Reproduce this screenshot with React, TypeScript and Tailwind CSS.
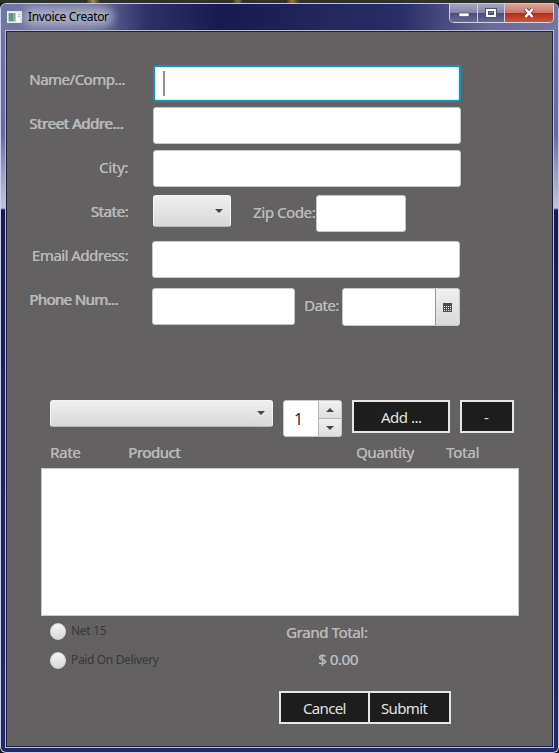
import React from "react";

const field =
  "box-border shrink-0 rounded-[3px] border border-[#c9c8c8] bg-white";
const silver =
  "box-border shrink-0 rounded-[3px] border border-[#f4f4f4] border-b-[#b8b8b8] bg-gradient-to-b from-[#efefef] to-[#d9d9d9]";
const label =
  "block shrink-0 whitespace-nowrap text-[15px] leading-[20px] text-[#b9b9b9]";
const thin = "[text-shadow:.3px_0_#b9b9b9]";
const heavy = "[text-shadow:.8px_0_#b9b9b9]";
const dark =
  "box-border shrink-0 border-2 border-[#e6e6e6] bg-[#1d1d1d] text-[15px] leading-[20px] pt-[5px] pb-[4px] text-[#e2e2e2] whitespace-nowrap text-left";

function Arrow({ up = false }: { up?: boolean }) {
  return (
    <svg width="8" height="4" viewBox="0 0 8 4" className="block shrink-0">
      <path d={up ? "M0 4L4 0L8 4Z" : "M0 0H8L4 4Z"} fill="#464646" />
    </svg>
  );
}

function Radio({ text, className }: { text: string; className: string }) {
  return (
    <div className="flex h-[29px] items-start">
      <span className="mt-px h-[17px] w-4 shrink-0 rounded-full border border-[#cfcfcf] bg-gradient-to-b from-[#f5f5f5] to-[#d8d8d8]" />
      <span
        className={`ml-[5px] whitespace-nowrap text-[12px] leading-[18px] text-[#373737] ${className}`}
      >
        {text}
      </span>
    </div>
  );
}

function TitleBar() {
  return (
    <header className="h-[26px] shrink-0 overflow-hidden rounded-t-[5px] bg-[linear-gradient(90deg,#7476a2_0px,#6c6e9e_90px,#2f3269_145px,#171950_220px,#24285f_330px,#292d68_400px,#6a6b98_490px,#7477a2_558px)]">
      <div className="flex h-full items-start">
        <svg width="15" height="12" viewBox="0 0 15 12" className="ml-[6px] mt-[7px] shrink-0">
          <rect width="15" height="12" fill="#e9eeee" />
          <rect x="1.5" y="2" width="7" height="8.5" fill="#88aaa2" />
          <rect x="2" y="2.5" width="4" height="7.5" fill="#5c9484" />
          <rect x="9" y="2" width="4" height="8.5" fill="#fff" />
          <path d="M11 3.5h2M11 5.5h2" stroke="#bbb" />
        </svg>
        <span className="ml-[6px] mt-[8px] h-[10px] whitespace-nowrap rounded-[6px] bg-[#b0b1c8]/80 text-[12px] leading-[10px] tracking-[-0.35px] text-black shadow-[0_0_9px_5px_rgba(176,177,200,0.8)]">
          Invoice Creator
        </span>
        <div className="ml-auto mr-[4px] flex h-[19px] w-[105px] overflow-hidden rounded-b-[5px] border border-t-0 border-[#d3d1e4]">
          <div className="flex w-[28px] items-center justify-center border-r border-[#cfcde0] bg-[linear-gradient(#a5a4bf_0%,#8382a6_50%,#4b4c7c_51%,#6a6a98_100%)]">
            <svg width="12" height="6" viewBox="0 0 12 6" className="mt-[4px]">
              <rect x="1" y="1" width="10" height="3.5" fill="#fff" stroke="#555577" strokeWidth=".7" />
            </svg>
          </div>
          <div className="flex w-[27px] items-center justify-center border-r border-[#cfcde0] bg-[linear-gradient(#a5a4bf_0%,#8382a6_50%,#4b4c7c_51%,#6a6a98_100%)]">
            <svg width="12" height="10" viewBox="0 0 12 10">
              <rect x="2" y="2" width="8" height="6" fill="none" stroke="#50506e" strokeWidth="4" />
              <rect x="2" y="2" width="8" height="6" fill="none" stroke="#fff" strokeWidth="2" />
            </svg>
          </div>
          <div className="flex flex-1 items-center justify-center bg-[linear-gradient(#dfa196_0%,#c9766b_48%,#b32b1c_50%,#d0543b_100%)]">
            <svg width="12" height="10" viewBox="0 0 12 10">
              <path d="M2.5 1L9.5 9M9.5 1L2.5 9" stroke="#693534" strokeWidth="4" />
              <path d="M2.5 1L9.5 9M9.5 1L2.5 9" stroke="#fff" strokeWidth="2.6" />
            </svg>
          </div>
        </div>
      </div>
    </header>
  );
}

export default function App() {
  return (
    <div className="flex h-[753px] w-[559px] flex-col overflow-hidden bg-[#15151c] font-['Noto_Sans','Open_Sans',sans-serif]">
      <div className="h-[3px] shrink-0 bg-[linear-gradient(90deg,#2d2f29_0px,#2d2f29_86px,#a08c5c_93px,#2d2f29_100px,#30312b_232px,#80704c_238px,#30312b_243px,#30312b_286px,#9c7840_292px,#30312b_300px,#30312b_559px)]" />
      <div className="flex h-[750px] flex-col rounded-[6px] border border-b-[#c9d1ee] border-l-[#c8d0f0] border-r-[#c0c8e8] border-t-[#c5c8dc] bg-[linear-gradient(#7476a2_0px,#696c9b_130px,#9ea0bd_170px,#c4c4d5_204px,#191b50_206px,#20235f_500px,#242866_750px)]">
        <TitleBar />
        <main className="mx-[4px] flex h-[718px] shrink-0 border border-[#b9bcd9]">
          <div className="flex h-[716px] w-full flex-col border border-[#202044] bg-[#636162]">
            <div className="mt-[33px] flex h-[42px] shrink-0">
              <span className={`${label} ml-[22px] mt-[4px] w-[124px] tracking-[-0.5px] [text-shadow:.5px_0_#b9b9b9]`}>
                Name/Comp...
              </span>
              <div className="flex h-[37px] w-[308px] shrink-0 rounded-[3px] border-2 border-[#1b90b6] bg-white shadow-[inset_0_0_1px_1px_#cdf4ff]">
                <span className="ml-[8px] mt-[4px] h-[25px] w-[2px] bg-[#919191]" />
              </div>
            </div>
            <div className="flex h-[43px] shrink-0">
              <span className={`${label} ${heavy} ml-[22px] mt-[6px] w-[124px] tracking-[-0.42px]`}>
                Street Addre...
              </span>
              <div className={`${field} h-[37px] w-[308px]`} />
            </div>
            <div className="flex h-[45px] shrink-0">
              <span className={`${label} ${thin} mt-[7px] w-[121px] text-right tracking-[-0.3px]`}>City:</span>
              <div className={`${field} ml-[25px] h-[37px] w-[308px]`} />
            </div>
            <div className="flex h-[46px] shrink-0">
              <span className={`${label} mt-[6px] w-[121px] text-right tracking-[-0.4px] [text-shadow:.7px_0_#b9b9b9]`}>
                State:
              </span>
              <div className={`${silver} ml-[25px] flex h-[32px] w-[78px] justify-end pr-[7px] pt-[13px]`}>
                <Arrow />
              </div>
              <span className={`${label} ${thin} ml-[22px] mt-[7px] w-[63px] tracking-[-0.4px]`}>Zip Code:</span>
              <div className={`${field} h-[37px] w-[90px]`} />
            </div>
            <div className="flex h-[47px] shrink-0">
              <span className={`${label} ${thin} mt-[4px] w-[121px] text-right tracking-[-0.5px]`}>
                Email Address:
              </span>
              <div className={`${field} ml-[24px] h-[37px] w-[308px]`} />
            </div>
            <div className="flex h-[112px] shrink-0">
              <span className={`${label} ${heavy} ml-[22px] mt-px w-[123px] tracking-[-0.6px]`}>
                Phone Num...
              </span>
              <div className={`${field} h-[37px] w-[143px]`} />
              <span className={`${label} ${thin} ml-[9px] mt-[7px] w-[38px] tracking-[-0.5px]`}>Date:</span>
              <div className={`${field} flex h-[38px] w-[118px] justify-end overflow-hidden`}>
                <div className="flex w-[24px] items-center justify-center border-l border-[#999] bg-gradient-to-b from-[#efefef] to-[#d9d9d9]">
                  <svg width="9" height="9" viewBox="0 0 9 9">
                    <path d="M0 0H9V9H0Z" fill="#4b4b4b" />
                    <path d="M1 3.5H8M1 5.5H8M1 7.5H8" stroke="#eee" strokeDasharray="1 1" />
                  </svg>
                </div>
              </div>
            </div>
            <div className="ml-[43px] flex h-[43px] shrink-0">
              <div className={`${silver} flex h-[27px] w-[223px] justify-end pr-[7px] pt-[10px]`}>
                <Arrow />
              </div>
              <div className={`${field} ml-[10px] flex h-[37px] w-[59px] overflow-hidden`}>
                <span className="w-[34px] pl-[10px] text-[16px] leading-[36px] text-[#303030]">1</span>
                <div className="flex flex-1 flex-col border-l border-[#b5b5b5]">
                  <div className="flex h-[18px] items-center justify-center border-b border-[#b5b5b5] bg-gradient-to-b from-[#f1f1f1] to-[#dedede]">
                    <Arrow up />
                  </div>
                  <div className="flex flex-1 items-center justify-center bg-gradient-to-b from-[#f1f1f1] to-[#dedede]">
                    <Arrow />
                  </div>
                </div>
              </div>
              <button className={`${dark} ml-[10px] h-[33px] w-[98px] pl-[27px] tracking-[-0.5px]`}>Add ...</button>
              <button className={`${dark} ml-[10px] h-[33px] w-[54px] pl-[22px]`}>-</button>
            </div>
            <div className="ml-[43px] flex h-[25px] shrink-0">
              <span className={`${label} ${thin} -mt-px w-[78px] tracking-[-0.3px]`}>Rate</span>
              <span className={`${label} -mt-px w-[228px] tracking-[-0.45px] [text-shadow:.6px_0_#b9b9b9]`}>
                Product
              </span>
              <span className={`${label} ${thin} -mt-px w-[90px] tracking-[-0.4px]`}>Quantity</span>
              <span className={`${label} ${thin} -mt-px tracking-[-0.2px]`}>Total</span>
            </div>
            <div className="ml-[34px] h-[148px] w-[478px] shrink-0 border border-[#cacaca] bg-white" />
            <div className="ml-[43px] mt-[6px] flex h-[69px] shrink-0">
              <div className="w-[236px]">
                <Radio text="Net 15" className="tracking-[-0.3px]" />
                <Radio text="Paid On Delivery" className="tracking-[-0.35px]" />
              </div>
              <div>
                <span className={`${label} ${thin} tracking-[-0.35px]`}>Grand Total:</span>
                <span className={`${label} ${thin} ml-[32px] mt-[7px] tracking-[-0.4px]`}>$ 0.00</span>
              </div>
            </div>
            <div className="ml-[272px] flex shrink-0">
              <button className={`${dark} h-[33px] w-[91px] pl-[22px] tracking-[-0.65px]`}>Cancel</button>
              <button className={`${dark} -ml-[2px] h-[33px] w-[83px] pl-[11px] tracking-[-0.65px]`}>Submit</button>
            </div>
          </div>
        </main>
      </div>
    </div>
  );
}
